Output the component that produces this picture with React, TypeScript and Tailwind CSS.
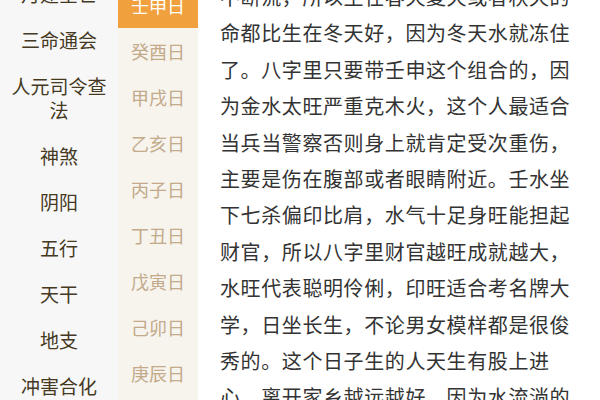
import React from "react";

const leftItems = ["月建空亡", "三命通会", "人元司令查法", "神煞", "阴阳", "五行", "天干", "地支", "冲害合化", "纳音"];
const midItems = ["壬申日", "癸酉日", "甲戌日", "乙亥日", "丙子日", "丁丑日", "戊寅日", "己卯日", "庚辰日", "辛巳日"];
const lines = [
  "不断流，所以生在春天夏天或者秋天的",
  "命都比生在冬天好，因为冬天水就冻住",
  "了。八字里只要带壬申这个组合的，因",
  "为金水太旺严重克木火，这个人最适合",
  "当兵当警察否则身上就肯定受次重伤，",
  "主要是伤在腹部或者眼睛附近。壬水坐",
  "下七杀偏印比肩，水气十足身旺能担起",
  "财官，所以八字里财官越旺成就越大，",
  "水旺代表聪明伶俐，印旺适合考名牌大",
  "学，日坐长生，不论男女模样都是很俊",
  "秀的。这个日子生的人天生有股上进",
  "心，离开家乡越远越好，因为水流淌的",
];

export default function App() {
  return (
    <div
      className="w-[600px] h-[400px] overflow-hidden flex bg-white"
      style={{ fontFamily: '"Noto Sans CJK SC", "Noto Sans", sans-serif' }}
    >
      <div className="w-[118px] shrink-0 bg-[#f7f7f7] flex flex-col">
        <div className="mt-[-29px] flex flex-col">
          {leftItems.map((t) => (
            <div
              key={t}
              className="min-h-[46px] px-2 py-[11px] flex items-center justify-center text-center text-[19px] leading-[24px] text-[#45391f]"
            >
              {t}
            </div>
          ))}
        </div>
      </div>
      <div className="w-[80px] shrink-0 bg-[#f7f3ed] flex flex-col">
        <div className="mt-[-18px] flex flex-col">
          {midItems.map((t, i) => (
            <div
              key={t}
              className={
                i === 0
                  ? "h-[46px] flex items-center justify-center text-[18px] text-white bg-[#f0a03c]"
                  : "h-[46px] flex items-center justify-center text-[18px] text-[#c2aa8a]"
              }
            >
              {t}
            </div>
          ))}
        </div>
      </div>
      <div className="flex-1 pl-[22px]">
        <div className="mt-[-21px] flex flex-col">
          {lines.map((l, i) => (
            <div
              key={i}
              className="whitespace-nowrap text-[20px] leading-[36.4px] tracking-[0.6px] text-[#333333]"
            >
              {l}
            </div>
          ))}
        </div>
      </div>
    </div>
  );
}
